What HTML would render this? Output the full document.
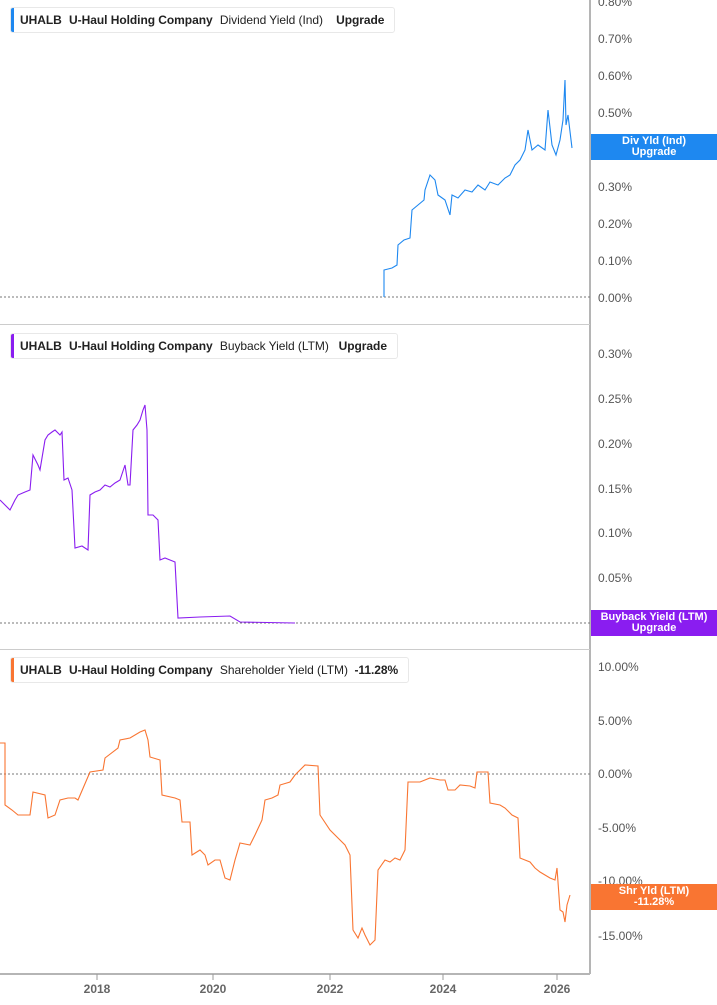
<!DOCTYPE html>
<html><head><meta charset="utf-8"><style>
body{margin:0;background:#fff;width:717px;height:1005px;overflow:hidden;font-family:"Liberation Sans",sans-serif}
svg{position:absolute;left:0;top:0}
.lg{position:absolute;left:10px;height:24px;border:1px solid #e8e8e8;border-radius:3px;background:#fff;font-size:12px;letter-spacing:-0.05px;color:#222;line-height:24px;padding:0 6px 0 9px;white-space:nowrap}
.lg:before{content:"";position:absolute;left:0;top:0;bottom:0;width:3px;border-radius:2px 0 0 2px;background:var(--c)}
.lg b{margin-right:4px}
.tag{position:absolute;left:591px;width:126px;color:#fff;font-size:11px;font-weight:bold;text-align:center;line-height:11px;padding:2px 0}
</style></head><body>
<svg width="717" height="1005" font-family="Liberation Sans, sans-serif" font-size="12" fill="#555">
<line x1="590" y1="0" x2="590" y2="974" stroke="#b5b5b5" stroke-width="2"/>
<line x1="0" y1="974" x2="590" y2="974" stroke="#b5b5b5" stroke-width="2"/>
<line x1="0" y1="324.5" x2="590" y2="324.5" stroke="#ccc"/>
<line x1="0" y1="649.5" x2="590" y2="649.5" stroke="#ccc"/>
<g stroke="#777" stroke-dasharray="2,2"><line x1="0" y1="297" x2="590" y2="297"/><line x1="0" y1="623" x2="590" y2="623"/><line x1="0" y1="774" x2="590" y2="774"/></g>
<g>
<text x="598" y="6">0.80%</text><text x="598" y="43">0.70%</text><text x="598" y="80">0.60%</text><text x="598" y="117">0.50%</text><text x="598" y="191">0.30%</text><text x="598" y="228">0.20%</text><text x="598" y="265">0.10%</text><text x="598" y="302">0.00%</text>
<text x="598" y="358">0.30%</text><text x="598" y="403">0.25%</text><text x="598" y="448">0.20%</text><text x="598" y="493">0.15%</text><text x="598" y="537">0.10%</text><text x="598" y="582">0.05%</text>
<text x="598" y="671">10.00%</text><text x="598" y="725">5.00%</text><text x="598" y="778">0.00%</text><text x="598" y="832">-5.00%</text><text x="598" y="885">-10.00%</text><text x="598" y="940">-15.00%</text>
</g>
<g font-weight="bold" fill="#666" text-anchor="middle" font-size="12"><text x="97" y="993">2018</text><text x="213" y="993">2020</text><text x="330" y="993">2022</text><text x="443" y="993">2024</text><text x="557" y="993">2026</text></g>
<g stroke="#999"><line x1="97" y1="974" x2="97" y2="980"/><line x1="213" y1="974" x2="213" y2="980"/><line x1="330" y1="974" x2="330" y2="980"/><line x1="443" y1="974" x2="443" y2="980"/><line x1="557" y1="974" x2="557" y2="980"/></g>
<polyline fill="none" stroke="#1e88f0" stroke-width="1.1" points="384,297 384,270 392,268 397,265 398,245 404,240 410,238 412,210 418,205 424,200 425,190 430,175 435,180 438,195 445,200 450,215 452,195 458,198 465,190 472,192 478,185 485,190 490,182 498,185 505,178 510,175 515,165 520,160 525,150 528,130 532,150 538,145 545,150 548,110 552,145 556,155 560,140 563,120 565,80 566,125 568,115 572,148"/>
<polyline fill="none" stroke="#8a1df0" stroke-width="1.1" points="0,500 5,505 10,510 15,500 18,495 25,492 30,490 33,455 38,465 40,470 45,440 48,435 52,432 55,430 60,435 62,432 64,480 68,478 72,490 75,548 82,546 88,550 90,495 95,492 100,490 105,485 110,487 115,483 120,480 125,465 128,485 130,485 133,430 137,425 140,420 143,410 145,405 147,430 148,515 153,515 158,520 160,560 165,558 170,560 175,562 178,618 200,617 230,616 240,622 295,623"/>
<polyline fill="none" stroke="#f97532" stroke-width="1.1" points="0,743 5,743 5,805 12,810 18,815 30,815 33,792 45,795 48,818 55,815 60,800 68,798 75,798 78,800 90,772 103,770 105,758 118,748 120,740 130,738 140,732 145,730 148,740 150,757 160,760 162,795 175,798 180,800 182,822 190,822 192,855 200,850 205,855 208,865 215,860 220,860 225,878 230,880 235,860 240,843 250,845 255,835 262,820 265,800 272,798 278,795 280,785 290,782 295,775 300,770 305,765 318,766 320,815 330,830 340,840 345,845 350,855 353,930 358,938 362,928 365,935 370,945 375,940 378,870 385,860 390,862 395,858 400,860 405,850 408,782 420,782 430,778 440,780 445,780 448,790 455,790 460,785 470,786 475,788 477,772 488,772 490,803 500,805 505,808 512,815 518,818 520,858 525,860 530,862 535,868 540,872 545,875 550,878 555,880 557,868 560,910 563,912 565,922 567,905 570,895"/>
</svg>
<div class="lg" style="top:7px;--c:#1e88f0"><b>UHALB</b> <b>U-Haul Holding Company</b> Dividend Yield (Ind) &nbsp;&nbsp;&nbsp;<b>Upgrade</b></div>
<div class="lg" style="top:333px;--c:#8a1df0"><b>UHALB</b> <b>U-Haul Holding Company</b> Buyback Yield (LTM) &nbsp;&nbsp;<b>Upgrade</b></div>
<div class="lg" style="top:657px;--c:#f97532"><b>UHALB</b> <b>U-Haul Holding Company</b> Shareholder Yield (LTM) &nbsp;<b>-11.28%</b></div>
<div class="tag" style="top:134px;background:#1e88f0">Div Yld (Ind)<br>Upgrade</div>
<div class="tag" style="top:610px;background:#8a1df0">Buyback Yield (LTM)<br>Upgrade</div>
<div class="tag" style="top:884px;background:#f97532">Shr Yld (LTM)<br>-11.28%</div>
</body></html>
